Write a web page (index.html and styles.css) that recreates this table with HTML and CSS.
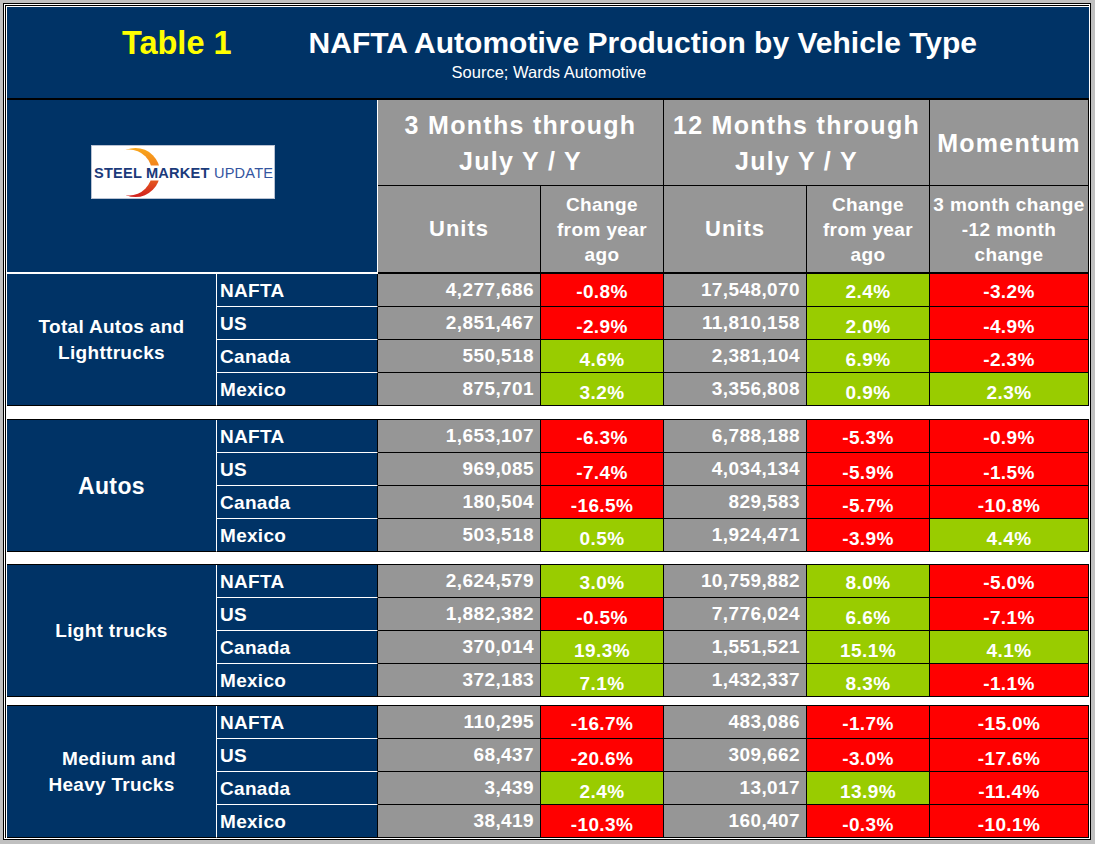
FILE: index.html
```html
<!DOCTYPE html>
<html>
<head>
<meta charset="utf-8">
<link rel="stylesheet" href="styles.css">
</head>
<body>
<div class="frame"><div class="inner"><div class="sheet">
  <div class="title">
    <div class="t1">Table 1</div>
    <div class="main">
      <div class="h1">NAFTA Automotive Production by Vehicle Type</div>
      <div class="src">Source; Wards Automotive</div>
    </div>
  </div>

  <div class="head">
    <div class="logo-cell">
      <div class="logo">
        <svg width="182" height="52" viewBox="0 0 182 52">
          <defs>
            <linearGradient id="arc" x1="0" y1="0" x2="0" y2="1">
              <stop offset="0" stop-color="#f9a81c"/>
              <stop offset="0.45" stop-color="#f07a1e"/>
              <stop offset="1" stop-color="#d1201f"/>
            </linearGradient>
            <mask id="cut">
              <rect width="182" height="52" fill="#fff"/>
              <circle cx="37" cy="26.5" r="23" fill="#000"/>
              <rect x="0" y="19.5" width="182" height="15" fill="#000"/>
            </mask>
          </defs>
          <circle cx="43.5" cy="26.5" r="24.5" fill="url(#arc)" mask="url(#cut)"/>
          <text x="2" y="31.7" textLength="179" lengthAdjust="spacing" font-family="Liberation Sans, Arial, sans-serif" font-size="14.6" font-weight="bold" fill="#1b3a7a">STEEL MARKET <tspan font-weight="normal" fill="#34559f">UPDATE</tspan></text>
        </svg>
      </div>
    </div>
    <div class="hc big span-a"><div>3 Months through<br>July Y / Y</div></div>
    <div class="hc big span-b"><div>12 Months through<br>July Y / Y</div></div>
    <div class="hc big"><div>Momentum</div></div>
    <div class="hc sub units-h"><div>Units</div></div>
    <div class="hc sub chg-h"><div>Change<br>from year<br>ago</div></div>
    <div class="hc sub units-h"><div>Units</div></div>
    <div class="hc sub chg-h"><div>Change<br>from year<br>ago</div></div>
    <div class="hc sub chg-h"><div>3 month change<br>-12 month<br>change</div></div>
  </div>

  <div class="group">
    <div class="lab"><div>Total Autos and<br>Lighttrucks</div></div>
    <div class="cty">NAFTA</div><div class="num">4,277,686</div><div class="pct first r">-0.8%</div><div class="num">17,548,070</div><div class="pct first g">2.4%</div><div class="pct first r">-3.2%</div>
    <div class="cty">US</div><div class="num">2,851,467</div><div class="pct r">-2.9%</div><div class="num">11,810,158</div><div class="pct g">2.0%</div><div class="pct r">-4.9%</div>
    <div class="cty">Canada</div><div class="num">550,518</div><div class="pct g">4.6%</div><div class="num">2,381,104</div><div class="pct g">6.9%</div><div class="pct r">-2.3%</div>
    <div class="cty last">Mexico</div><div class="num">875,701</div><div class="pct g">3.2%</div><div class="num">3,356,808</div><div class="pct g">0.9%</div><div class="pct g">2.3%</div>
  </div>

  <div class="group g2">
    <div class="lab autos"><div>Autos</div></div>
    <div class="cty">NAFTA</div><div class="num">1,653,107</div><div class="pct first r">-6.3%</div><div class="num">6,788,188</div><div class="pct first r">-5.3%</div><div class="pct first r">-0.9%</div>
    <div class="cty">US</div><div class="num">969,085</div><div class="pct r">-7.4%</div><div class="num">4,034,134</div><div class="pct r">-5.9%</div><div class="pct r">-1.5%</div>
    <div class="cty">Canada</div><div class="num">180,504</div><div class="pct r">-16.5%</div><div class="num">829,583</div><div class="pct r">-5.7%</div><div class="pct r">-10.8%</div>
    <div class="cty last">Mexico</div><div class="num">503,518</div><div class="pct g">0.5%</div><div class="num">1,924,471</div><div class="pct r">-3.9%</div><div class="pct g">4.4%</div>
  </div>

  <div class="group g3">
    <div class="lab"><div>Light trucks</div></div>
    <div class="cty">NAFTA</div><div class="num">2,624,579</div><div class="pct first g">3.0%</div><div class="num">10,759,882</div><div class="pct first g">8.0%</div><div class="pct first r">-5.0%</div>
    <div class="cty">US</div><div class="num">1,882,382</div><div class="pct r">-0.5%</div><div class="num">7,776,024</div><div class="pct g">6.6%</div><div class="pct r">-7.1%</div>
    <div class="cty">Canada</div><div class="num">370,014</div><div class="pct g">19.3%</div><div class="num">1,551,521</div><div class="pct g">15.1%</div><div class="pct g">4.1%</div>
    <div class="cty last">Mexico</div><div class="num">372,183</div><div class="pct g">7.1%</div><div class="num">1,432,337</div><div class="pct g">8.3%</div><div class="pct r">-1.1%</div>
  </div>

  <div class="group g4">
    <div class="lab"><div><span class="shift">Medium and</span><br>Heavy Trucks</div></div>
    <div class="cty">NAFTA</div><div class="num">110,295</div><div class="pct first r">-16.7%</div><div class="num">483,086</div><div class="pct first r">-1.7%</div><div class="pct first r">-15.0%</div>
    <div class="cty">US</div><div class="num">68,437</div><div class="pct r">-20.6%</div><div class="num">309,662</div><div class="pct r">-3.0%</div><div class="pct r">-17.6%</div>
    <div class="cty">Canada</div><div class="num">3,439</div><div class="pct g">2.4%</div><div class="num">13,017</div><div class="pct g">13.9%</div><div class="pct r">-11.4%</div>
    <div class="cty last">Mexico</div><div class="num">38,419</div><div class="pct r">-10.3%</div><div class="num">160,407</div><div class="pct r">-0.3%</div><div class="pct r">-10.1%</div>
  </div>
</div></div></div>
</body>
</html>
```

FILE: styles.css
```css
* { box-sizing: border-box; }

body {
  margin: 0;
  background: #c0c0c0;
  font-family: "Liberation Sans", Arial, sans-serif;
  height: 844px;
  overflow: hidden;
}

.frame {
  margin: 3px 0 0 3px;
  width: 1088px;
  border: 1px solid #000;
  padding: 1px;
  background: #fff;
}

.inner {
  border-left: 1px solid #000;
  border-top: 1px solid #000;
  padding: 1px 0 0 1px;
}

.sheet {
  width: 1082px;
  background: #fff;
}

/* ---------- title ---------- */
.title {
  height: 93px;
  border-bottom: 2px solid #000;
  background: #003366;
  display: flex;
  align-items: flex-start;
  padding-left: 115px;
  font-weight: bold;
}

.t1 {
  color: #ffff00;
  font-size: 32.5px;
  line-height: 36px;
  margin-top: 18px;
}

.main {
  margin-left: 77px;
  color: #fff;
}

.h1 {
  font-size: 30px;
  line-height: 34px;
  margin-top: 19px;
}

.src {
  font-weight: normal;
  font-size: 16.5px;
  line-height: 18px;
  margin-top: 3px;
  padding-left: 143px;
}

/* ---------- header ---------- */
.head {
  display: grid;
  grid-template-columns: 371px 163px 123px 143px 123px 159px;
  grid-template-rows: 86px 88px;
}

.logo-cell {
  grid-row: 1 / 3;
  background: #003366;
  border-right: 1px solid #fff;
  border-bottom: 2px solid #fff;
  padding: 45px 0 0 84px;
}

.logo {
  width: 184px;
  height: 54px;
  background: #fff;
  border: 1px solid #b9c2d3;
}

.logo svg { display: block; }

.hc {
  background: #969696;
  color: #fff;
  font-weight: bold;
  border-right: 1px solid #000;
  border-bottom: 1px solid #000;
  display: flex;
  align-items: center;
  justify-content: center;
  text-align: center;
}

.hc.sub { border-bottom-width: 2px; }

.span-a { grid-column: 2 / 4; }
.span-b { grid-column: 4 / 6; }

.big {
  font-size: 25px;
  letter-spacing: 1.3px;
  line-height: 36px;
}

.units-h {
  font-size: 22px;
  letter-spacing: 1px;
}

.chg-h {
  font-size: 19px;
  letter-spacing: 0.4px;
  line-height: 25px;
}

/* ---------- data groups ---------- */
.group {
  display: grid;
  grid-template-columns: 210px 161px 163px 123px 143px 123px 159px;
  grid-template-rows: repeat(4, 33px);
  font-size: 19px;
  line-height: 22px;
  font-weight: bold;
  letter-spacing: 0.4px;
  color: #fff;
}

.g2 { margin-top: 13px; border-top: 1px solid #000; }
.g3 { margin-top: 12px; border-top: 1px solid #000; }
.g4 { margin-top: 8px; border-top: 1px solid #000; }

.lab {
  grid-row: 1 / 5;
  background: #003366;
  border-right: 1px solid #fff;
  border-bottom: 1px solid #000;
  display: flex;
  align-items: center;
  justify-content: center;
  text-align: center;
  line-height: 26px;
  letter-spacing: 0.3px;
}

.lab.autos {
  font-size: 23px;
  letter-spacing: 0.4px;
}

.shift {
  display: inline-block;
  margin-left: 15px;
}

.cty {
  background: #003366;
  border-right: 1px solid #000;
  border-bottom: 1px solid #fff;
  padding: 6px 0 0 3px;
  letter-spacing: 0.3px;
}

.cty.last { border-bottom-color: #000; }

.num,
.pct {
  border-right: 1px solid #000;
  border-bottom: 1px solid #000;
}

.num {
  background: #969696;
  text-align: right;
  padding: 5px 6px 0 0;
}

.pct {
  text-align: center;
  padding-top: 9px;
}

.pct.first { padding-top: 7px; }

.r { background: #ff0000; }
.g { background: #99cc00; }
```
